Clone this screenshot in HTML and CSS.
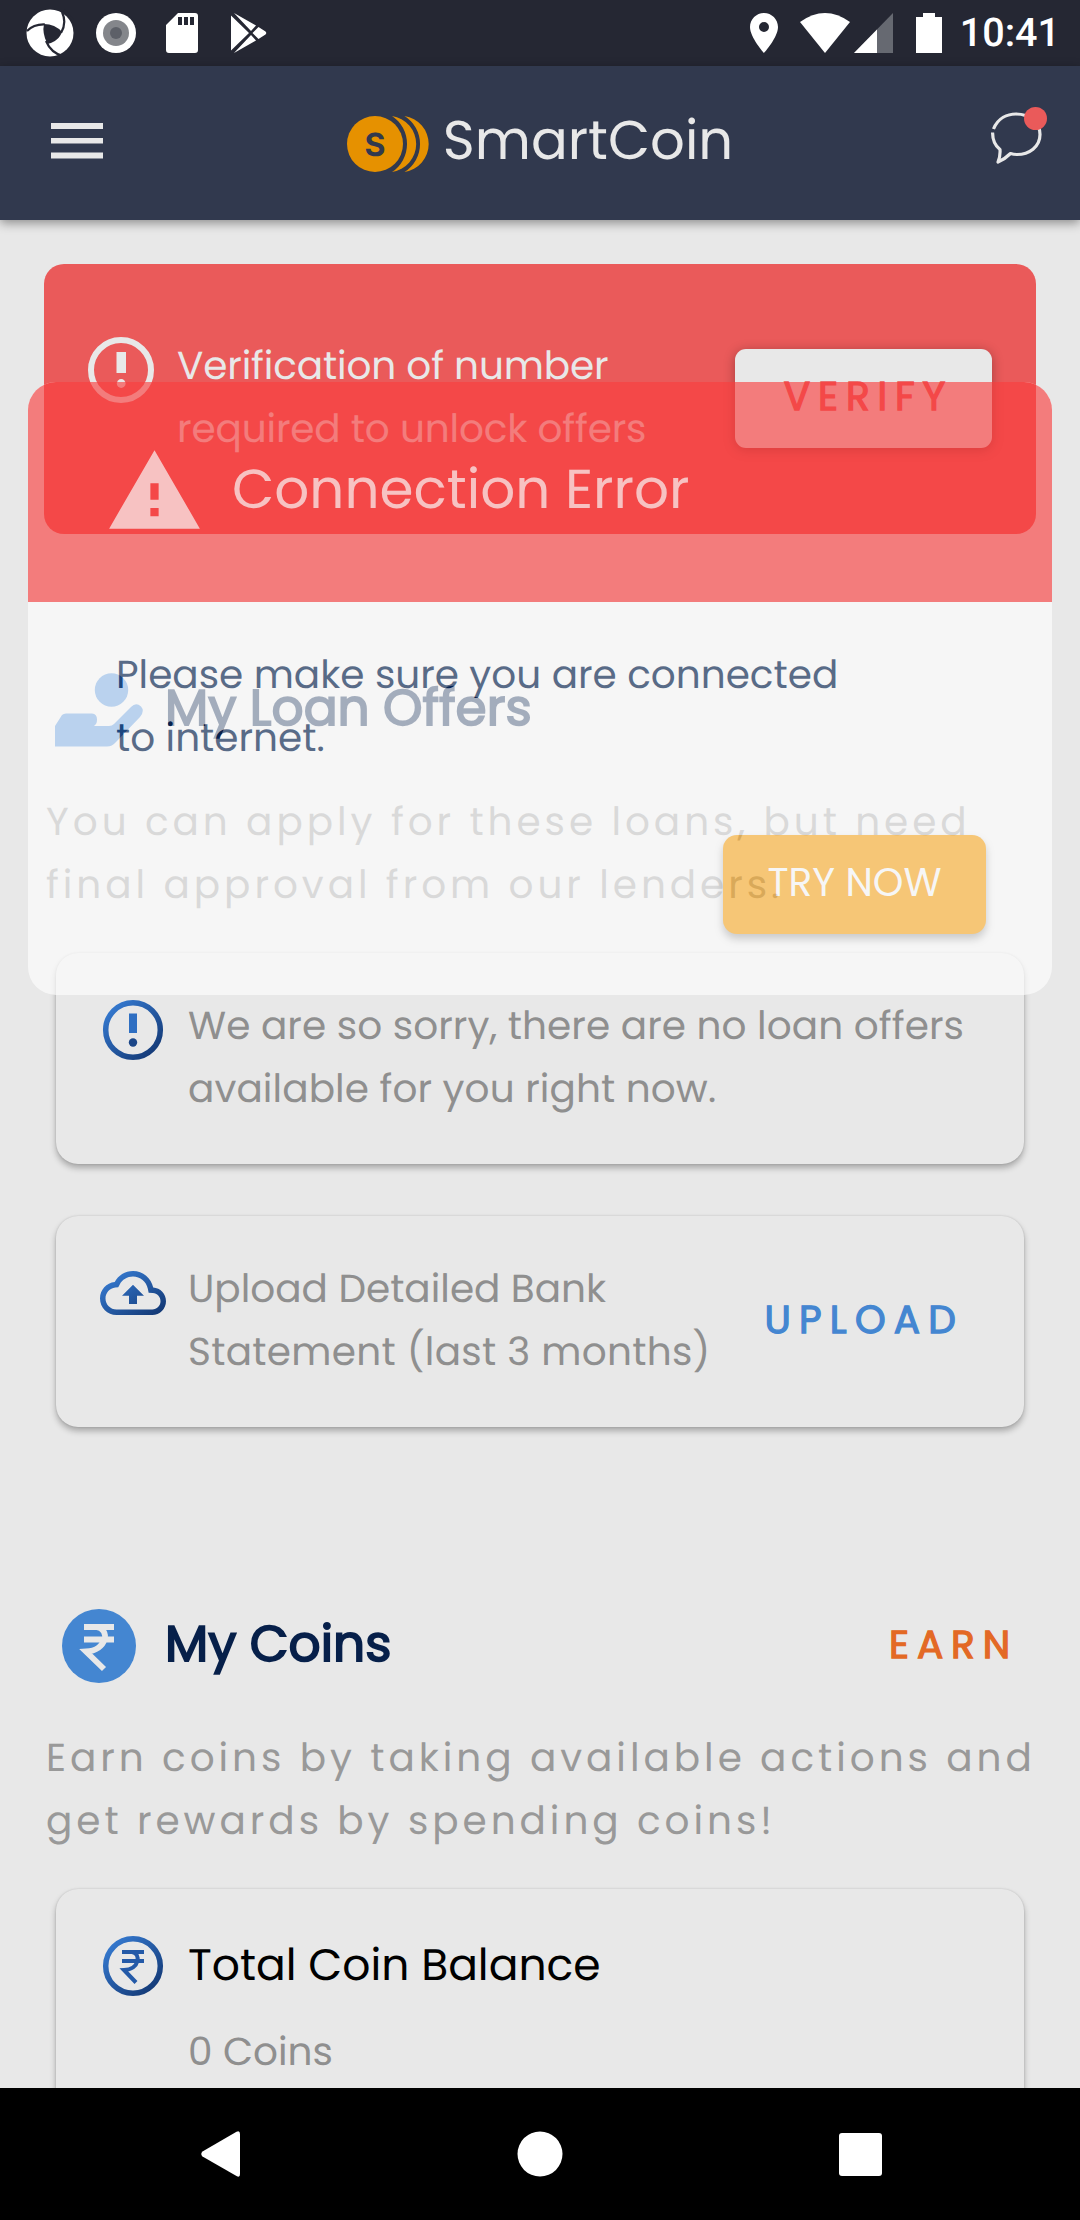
FILE: index.html
```html
<!DOCTYPE html>
<html lang="en">
<head>
<meta charset="utf-8">
<title>SmartCoin</title>
<link rel="stylesheet" href="styles.css">
</head>
<body>
<div class="screen">
  <header class="status">
    <div class="status-left">
      <svg class="ic-swirl" width="48" height="48" viewBox="0 0 48 48">
        <circle cx="24" cy="24" r="23.5" fill="#fff"/>
        <path d="M18 15Q29 15 36 23Q32 32 21 34Q16 24 18 15Z" fill="#252733"/>
        <path d="M1 22Q8 15 19 15.500M35 24Q41 14 36 3M20 32Q25 44 37 47M34 25Q30 32 21 34" fill="none" stroke="#252733" stroke-width="2.200"/>
        <path d="M38 1L47 11" stroke="#252733" stroke-width="2"/>
      </svg>
      <svg class="ic-disc" width="40" height="40" viewBox="0 0 40 40"><circle cx="20" cy="20" r="20" fill="#fff"/><circle cx="20" cy="20" r="13" fill="#84868b"/><circle cx="20" cy="20" r="6" fill="#5d6068"/></svg>
      <svg class="ic-sd" width="32" height="40" viewBox="0 0 32 40"><path fill="#fff" fill-rule="evenodd" d="M12 0H29Q32 0 32 3V37Q32 40 29 40H3Q0 40 0 37V12ZM12 4V12H16V4ZM18 4V12H22V4ZM24 4V12H28V4Z"/></svg>
      <svg class="ic-play" width="36" height="40" viewBox="0 0 36 40"><path fill="#fff" d="M0 2.500L18 20L0 37.500ZM3 0L25 12.500L20 18ZM20 22L25 27.500L3 40ZM27.500 14L34.500 18.500Q36 20 34.500 21.500L27.500 26L21.500 20Z"/></svg>
    </div>
    <div class="status-right">
      <svg class="ic-pin" width="28" height="40" viewBox="0 0 28 40"><path fill="#fff" fill-rule="evenodd" d="M14 0C6.300 0 0 6.300 0 14C0 24.500 14 40 14 40S28 24.500 28 14C28 6.300 21.700 0 14 0ZM14 19A5 5 0 1 1 14 9A5 5 0 0 1 14 19Z"/></svg>
      <svg class="ic-wifi" width="50" height="40" viewBox="0 0 50 40"><path fill="#fff" d="M0 9Q25 -9 50 9L25 40Z"/></svg>
      <svg class="ic-signal" width="39" height="40" viewBox="0 0 39 40"><path fill="#666971" d="M39 0V40H0Z"/><path fill="#fff" d="M23 16.500V40H0Z"/></svg>
      <svg class="ic-batt" width="26" height="40" viewBox="0 0 26 40"><path fill="#fff" d="M7 0H19V4H26V40H0V4H7Z"/></svg>
      <span class="clock">10:41</span>
    </div>
  </header>

  <div class="appbar">
    <svg width="52" height="36" viewBox="0 0 52 36"><path fill="#e8e8e8" d="M0 0H52V6H0ZM0 15H52V20.500H0ZM0 29.500H52V35.500H0Z"/></svg>
    <div class="brand">
      <svg class="coins" width="84" height="58" viewBox="0 0 84 58">
        <g fill="#e69100">
          <circle cx="28" cy="29" r="28"/>
          <path d="M45 1A28.300 28.300 0 0 1 45 57A33.600 33.600 0 0 0 45 1Z"/>
          <path d="M57.500 1A28.300 28.300 0 0 1 57.500 57A33 33 0 0 0 57.500 1Z"/>
        </g>
        <text class="coin-s" x="28" y="40.500" text-anchor="middle">S</text>
      </svg>
      <span class="brand-name">SmartCoin</span>
    </div>
    <svg class="chat" width="58" height="60" viewBox="0 0 58 60">
      <g fill="none" stroke="#e8e8e8" stroke-width="3.200" stroke-linejoin="round">
        <path d="M3.500 22C8 11 17.500 7 26 7C40 7 50 16 50 27.500C50 40 39 47.500 27 47.500Q23.500 47.500 20.500 46.500Q15 52 8 55Q10.500 49 10 42.500C5 38.500 2.500 32 2.600 25.500"/>
      </g>
      <circle cx="45.500" cy="11.500" r="11.500" fill="#ea5a5a"/>
    </svg>
  </div>

  <main class="content">
    <section class="alert">
      <svg class="alert-icon" width="66" height="66" viewBox="0 0 66 66"><circle cx="33" cy="33" r="30" fill="none" stroke="#e8e8e8" stroke-width="6"/><path fill="#e8e8e8" d="M28.500 15H38V36H28.500Z"/><circle cx="33.200" cy="46.500" r="4.400" fill="#e8e8e8"/></svg>
      <p class="alert-text body"><span>Verification of number</span><span>required to unlock offers</span></p>
      <button class="verify">VERIFY</button>
    </section>

    <section class="section">
      <div class="heading">
        <svg class="heading-icon" width="88" height="74" viewBox="0 0 88 74"><g fill="#4486d1"><circle cx="56.500" cy="17" r="16.700"/><path d="M0 53L7 42Q8.500 40.500 11 40.500H37Q42 41 42 46.500Q42 51 39 53H54Q57 53 59 51L76 34Q81 29 86 33.500Q90 38 85 44L61 69Q57 73.500 52 73.500H0Z"/></g></svg>
        <h2>My Loan Offers</h2>
      </div>
      <p class="lead"><span>You can apply for these loans, but need</span><span>final approval from our lenders.</span></p>
      <div class="card">
        <svg class="card-icon" width="66" height="66" viewBox="0 0 66 66">
          <defs><linearGradient id="blue" gradientUnits="userSpaceOnUse" x1="10" y1="8" x2="56" y2="58"><stop offset="0" stop-color="#367bd2"/><stop offset="1" stop-color="#133874"/></linearGradient></defs>
          <circle cx="33" cy="33" r="27.300" fill="none" stroke="url(#blue)" stroke-width="5.500"/><path fill="#2f6fc2" d="M29 16.500H37V36H29Z"/><circle cx="33" cy="45.500" r="4.200" fill="#1b4688"/></svg>
        <p class="body sorry"><span>We are so sorry, there are no loan offers</span><span>available for you right now.</span></p>
      </div>
      <div class="card card-upload">
        <svg class="card-icon" width="66" height="66" viewBox="0 0 24 24">
          <defs><linearGradient id="cloud" x1="0" y1="0" x2="1" y2="1"><stop offset="0.100" stop-color="#367bd2"/><stop offset="0.950" stop-color="#133874"/></linearGradient></defs>
          <path fill="url(#cloud)" d="M19.350 10.040C18.670 6.590 15.640 4 12 4 9.110 4 6.600 5.640 5.350 8.040 2.340 8.360 0 10.910 0 14c0 3.310 2.690 6 6 6h13c2.760 0 5-2.240 5-5 0-2.640-2.050-4.780-4.650-4.960zM19 18H6c-2.210 0-4-1.790-4-4 0-2.050 1.530-3.760 3.560-3.970l1.070-.110.500-.950C8.080 7.140 9.940 6 12 6c2.620 0 4.880 1.860 5.390 4.430l.300 1.500 1.530.110c1.560.100 2.780 1.410 2.780 2.960 0 1.650-1.350 3-3 3zM8 13h2.550v3h2.900v-3H16l-4-4z"/></svg>
        <p class="body"><span>Upload Detailed Bank</span><span class="statement">Statement (last 3 months)</span></p>
        <a class="action upload">UPLOAD</a>
      </div>
    </section>

    <section class="section section-coins">
      <div class="heading">
        <svg class="heading-icon coin-icon" width="74" height="74" viewBox="0 0 74 74"><circle cx="37" cy="37" r="37" fill="#4486d1"/><path d="M22 18H52M22 30.500H52M34 18C49 20 45 41.500 24 42.500L42 60" fill="none" stroke="#e8e8e8" stroke-width="5.800"/></svg>
        <h2>My Coins</h2>
        <a class="action earn">EARN</a>
      </div>
      <p class="lead"><span>Earn coins by taking available actions and</span><span>get rewards by spending coins!</span></p>
      <div class="card card-balance">
        <svg class="card-icon" width="66" height="66" viewBox="0 0 66 66"><circle cx="33" cy="33" r="27.300" fill="none" stroke="url(#blue)" stroke-width="5.500"/><path d="M22 19H44M22 28H44M32 19C41 20 40 36.500 24 37L36 49.500" fill="none" stroke="#245aa8" stroke-width="4"/></svg>
        <div>
          <h3>Total Coin Balance</h3>
          <p class="body"><span>0 Coins</span></p>
        </div>
      </div>
    </section>
  </main>

  <nav class="navbar">
    <svg width="40" height="46" viewBox="0 0 40 46"><path fill="#fff" d="M35.500 0.700Q39 -1 39 3V43Q39 47 35.500 45L1.500 25.500Q-1 23 1.500 20.500Z"/></svg>
    <svg width="46" height="46" viewBox="0 0 46 46"><circle cx="23" cy="23" r="22.500" fill="#fff"/></svg>
    <svg width="43" height="43" viewBox="0 0 43 43"><rect width="43" height="43" rx="3" fill="#fff"/></svg>
  </nav>

  <div class="dialog">
    <div class="dialog-head">
      <svg width="99" height="99" viewBox="0 0 24 24"><path fill="#fff" d="M1 21h22L12 2 1 21zm12-3h-2v-2h2v2zm0-4h-2v-4h2v4z"/></svg>
      <h1>Connection Error</h1>
    </div>
    <div class="dialog-body">
      <p class="body"><span>Please make sure you are connected</span><span>to internet.</span></p>
      <button class="try">TRY NOW</button>
    </div>
  </div>
</div>
</body>
</html>
```
FILE: styles.css
```css
* { box-sizing: border-box; margin: 0; padding: 0; }

body {
  background: #e8e8e8;
  font-family: Poppins, Inter, "Open Sans", sans-serif;
  text-rendering: geometricPrecision;
}

svg { display: block; flex: none; }
button { border: 0; font: inherit; }

.screen {
  position: relative;
  display: flex;
  flex-direction: column;
  width: 1080px;
  height: 2220px;
  overflow: hidden;
}

/* status bar */
.status {
  display: flex;
  justify-content: space-between;
  flex: none;
  height: 66px;
  padding: 0 20px 0 26px;
  background: #252733;
}
.status-left, .status-right { display: flex; align-items: center; }
.ic-disc { margin-left: 22px; }
.ic-sd { margin-left: 30px; }
.ic-play { margin-left: 33px; }
.ic-wifi { margin-left: 22px; }
.ic-signal { margin-left: 4px; }
.ic-batt { margin-left: 23px; }
.clock {
  margin-left: 18px;
  color: #fff;
  font: 500 39.5px/66px Roboto, sans-serif;
}

/* app bar */
.appbar {
  position: relative;
  display: flex;
  align-items: center;
  justify-content: space-between;
  flex: none;
  height: 154px;
  padding: 0 32px 4px 51px;
  background: #31394e;
  box-shadow: 0 3px 10px rgba(0, 0, 0, 0.4);
}
.brand { display: flex; align-items: center; margin-left: -13px; }
.coins { margin-top: 5px; }
.chat { margin-bottom: 8px; }
.brand-name {
  margin-left: 12px;
  color: #e8e8e8;
  font-size: 54.5px;
  line-height: 60px;
}
.coin-s { fill: #31394e; font: 700 32px Inter, sans-serif; }

/* page content */
.content { flex: 1; min-height: 0; padding-top: 44px; overflow: hidden; }

.body { font-size: 39px; line-height: 63px; color: #8f8f8f; white-space: nowrap; }
.body span, .lead span { display: block; }

.alert {
  display: flex;
  align-items: flex-start;
  height: 270px;
  margin: 0 44px;
  padding: 70px 44px 0;
  border-radius: 20px;
  background: #ea5a5a;
}
.alert-icon { margin-top: 3px; }
.alert-text { margin-left: 23px; color: #e8e8e8; letter-spacing: -0.15px; }
.verify {
  width: 257px;
  height: 99px;
  margin: 15px 0 0 auto;
  padding: 0 0 5px 10px;
  border-radius: 11px;
  background: #e8e8e8;
  box-shadow: 0 2px 12px rgba(0, 0, 0, 0.3);
  color: #ea5a5a;
  font-size: 39px;
  line-height: 63px;
  letter-spacing: 7.9px;
  -webkit-text-stroke: 1.3px #ea5a5a;
}

.section { padding-top: 136px; }
.section-coins { padding-top: 179px; }

.heading { display: flex; align-items: center; height: 76px; padding: 0 62px 0 55px; }
.heading-icon { margin-top: 4px; }
.coin-icon { margin: 3px 7px 0; }
h2 {
  margin-left: 22px;
  font-size: 50.2px;
  font-weight: 400;
  line-height: 76px;
  color: #07204a;
  -webkit-text-stroke: 1.8px #07204a;
}

.action { margin-left: auto; font-size: 39px; line-height: 63px; }
.upload { color: #4486d1; letter-spacing: 8.2px; -webkit-text-stroke: 1.3px #4486d1; }
.earn { color: #e36925; letter-spacing: 7.9px; -webkit-text-stroke: 1.3px #e36925; }

.lead {
  margin: 44px 0 0 46px;
  color: #999;
  font-size: 39px;
  line-height: 63px;
  letter-spacing: 3.95px;
  white-space: nowrap;
}

.card {
  display: flex;
  align-items: flex-start;
  height: 211px;
  margin: 37px 56px 0;
  padding: 41px 60px 0 44px;
  border-radius: 22px;
  background: #e8e8e8;
  box-shadow: 0 4px 6px rgba(0, 0, 0, 0.28), 0 0 2px rgba(0, 0, 0, 0.15);
}
.card-icon { margin: 3px 22px 0 0; }
.sorry { letter-spacing: 0.08px; }
.card-upload { margin-top: 52px; }
.card-upload .upload { margin-top: 31px; }
.statement { letter-spacing: 0.3px; }
.card-balance { height: 260px; padding-top: 45px; }
.card-balance .card-icon { margin-top: -1px; }
h3 {
  margin-bottom: 23px;
  color: #000;
  font-size: 44px;
  font-weight: 400;
  line-height: 63px;
}

/* connection dialog, faded over the page */
.dialog {
  position: absolute;
  top: 382px;
  left: 28px;
  width: 1024px;
  height: 613px;
  border-radius: 28px;
  background: #fff;
  overflow: hidden;
  opacity: 0.63;
}
.dialog-head {
  display: flex;
  align-items: flex-start;
  height: 220px;
  padding: 60px 77px 0;
  background: #fa3e3e;
}
h1 {
  margin: 12px 0 0 28px;
  color: #fff;
  font-size: 54.8px;
  font-weight: 400;
  line-height: 72px;
}
.dialog-body { display: flex; flex-direction: column; padding: 41px 66px 0 88px; }
.dialog-body .body { color: #062350; }
.try {
  align-self: flex-end;
  width: 263px;
  height: 99px;
  margin-top: 66px;
  padding-bottom: 4px;
  border-radius: 14px;
  background: #ffb335;
  box-shadow: 0 5px 8px rgba(0, 0, 0, 0.28);
  color: #fff;
  font-size: 39px;
  line-height: 63px;
}

/* system navigation */
.navbar {
  display: flex;
  align-items: center;
  justify-content: space-between;
  flex: none;
  height: 132px;
  padding: 0 198px 0 201px;
  background: #000;
}
```
